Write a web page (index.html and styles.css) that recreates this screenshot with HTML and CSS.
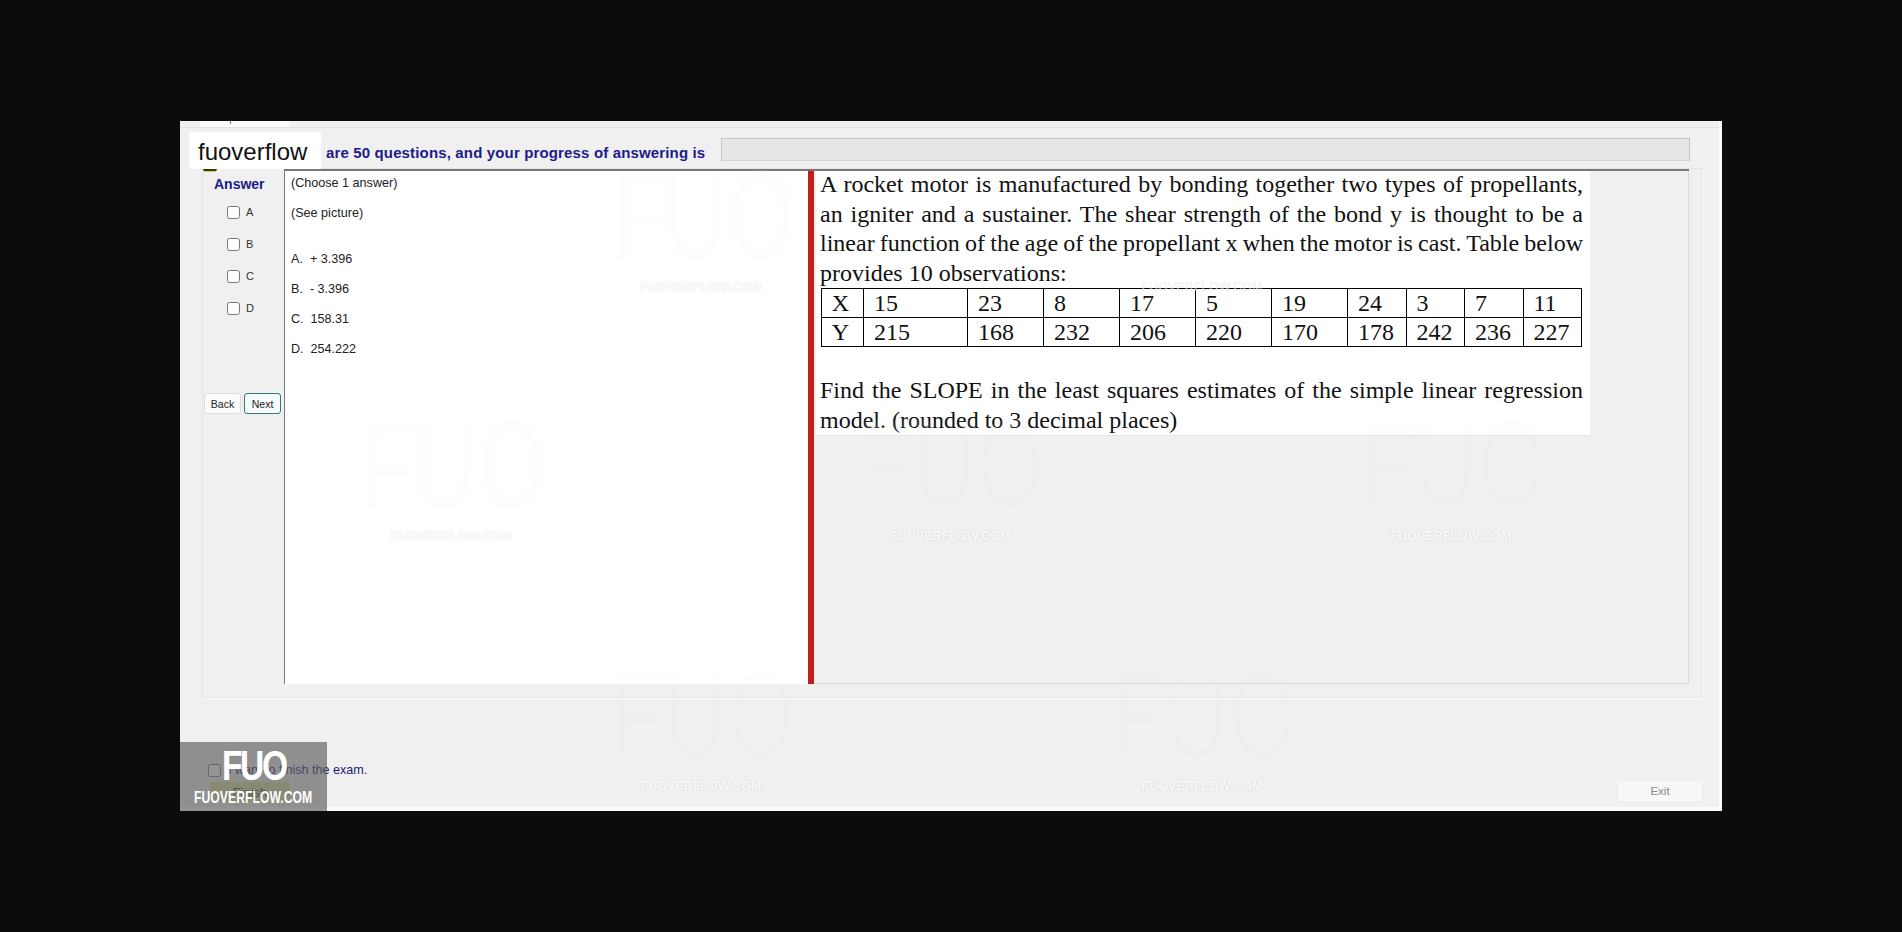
FILE: index.html
```html
<!DOCTYPE html>
<html lang="en">
<head>
  <meta charset="UTF-8" />
  <title>Exam</title>
  <meta name="viewport" content="width=device-width, initial-scale=1.0" />
  <link rel="stylesheet" href="styles.css">
</head>
<body>
  <div class="window">
    <div class="tabs"><div class="tab"></div></div>

    <div class="progress-row">
      <div class="progress-label">There are 50 questions, and your progress of answering is</div>
      <div class="progress-bar"></div>
    </div>

    <div class="frame">
      <div class="answers">
        <div class="answers-title">Answer</div>
        <label class="opt"><input type="checkbox" />A</label>
        <label class="opt"><input type="checkbox" />B</label>
        <label class="opt"><input type="checkbox" />C</label>
        <label class="opt"><input type="checkbox" />D</label>
        <div class="nav">
          <button class="btn" type="button">Back</button>
          <button class="btn btn-next" type="button">Next</button>
        </div>
      </div>

      <div class="split">
        <div class="pane-left">
          <p class="line">(Choose 1 answer)</p>
          <p class="line">(See picture)</p>
          <p class="line line-gap">A.&nbsp; + 3.396</p>
          <p class="line">B.&nbsp; - 3.396</p>
          <p class="line">C.&nbsp; 158.31</p>
          <p class="line">D.&nbsp; 254.222</p>
        </div>
        <div class="splitter"></div>
        <div class="pane-right">
          <div class="question">
            <p class="q-text q-intro">A rocket motor is manufactured by bonding together two types of propellants, an igniter and a sustainer. The shear strength of the bond y is thought to be a <span class="tight">linear function of the age of the propellant x when the motor is cast. Table below</span> provides 10 observations:</p>
            <table class="q-table">
              <colgroup>
                <col class="c-head"><col class="c-first"><col class="c-mid"><col class="c-mid"><col class="c-mid"><col class="c-mid"><col class="c-mid"><col class="c-end"><col class="c-end"><col class="c-end"><col class="c-end">
              </colgroup>
              <tr><th>X</th><td>15</td><td>23</td><td>8</td><td>17</td><td>5</td><td>19</td><td>24</td><td>3</td><td>7</td><td>11</td></tr>
              <tr><th>Y</th><td>215</td><td>168</td><td>232</td><td>206</td><td>220</td><td>170</td><td>178</td><td>242</td><td>236</td><td>227</td></tr>
            </table>
            <p class="q-text q-find">Find the SLOPE in the least squares estimates of the simple linear regression model. (rounded to 3 decimal places)</p>
          </div>
        </div>
      </div>
    </div>

    <div class="footer">
      <div class="finish">
        <label class="finish-check"><input type="checkbox" />I want to finish the exam.</label>
        <button class="btn-finish" type="button">Finish</button>
      </div>
      <button class="btn-exit" type="button">Exit</button>
    </div>

    <!-- watermarks sit on top of the app -->
    <div class="mark mark-1"><span class="mark-logo">FUO</span><span class="mark-text">FUOVERFLOW.COM</span></div>
    <div class="mark mark-2"><span class="mark-text">FUOVERFLOW.COM</span></div>
    <div class="mark mark-3"><span class="mark-logo">FUO</span><span class="mark-text">FUOVERFLOW.COM</span></div>
    <div class="mark mark-4"><span class="mark-logo">FUO</span><span class="mark-text">FUOVERFLOW.COM</span></div>
    <div class="mark mark-5"><span class="mark-logo">FUO</span><span class="mark-text">FUOVERFLOW.COM</span></div>
    <div class="mark mark-6"><span class="mark-logo">FUO</span><span class="mark-text">FUOVERFLOW.COM</span></div>
    <div class="mark mark-7"><span class="mark-logo">FUO</span><span class="mark-text">FUOVERFLOW.COM</span></div>

    <div class="brand">fuoverflow</div>
    <div class="stamp">
      <span class="stamp-logo">FUO</span>
      <span class="stamp-text">FUOVERFLOW.COM</span>
    </div>
  </div>
</body>
</html>
```

FILE: styles.css
```css
html, body {
  height: 100%;
}

body {
  margin: 0;
  background: #0c0c0c;
  font-family: "Liberation Sans", Arial, sans-serif;
  overflow: hidden;
}

p {
  margin: 0;
}

.window {
  position: relative;
  width: 1542px;
  height: 690px;
  margin: 121px 0 0 180px;
  background: #f0f0f0;
  border-right: 3px solid #fbfbfb;
  border-bottom: 4px solid #fbfbfb;
  box-sizing: border-box;
}

.tabs {
  height: 6px;
  border-bottom: 1px solid #e2e2e2;
}

.tab {
  position: relative;
  width: 90px;
  height: 6px;
  margin-left: 20px;
  background: #f9f9f9;
}

.tab::after {
  content: "";
  position: absolute;
  top: 0;
  left: 30px;
  width: 1px;
  height: 3px;
  background: #777;
}

.progress-row {
  display: flex;
  align-items: center;
  height: 23px;
  margin-top: 10px;
  padding-right: 29px;
  padding-left: 100px;
}

.progress-label {
  padding-top: 6px;
  font-size: 15px;
  font-weight: bold;
  letter-spacing: 0.15px;
  color: #1b1b8a;
  white-space: nowrap;
}

.progress-bar {
  width: 967px;
  height: 21px;
  margin-left: auto;
  background: #e6e6e6;
  border: 1px solid #c6c6c6;
  border-bottom-color: #d4d4d4;
}

.frame {
  display: flex;
  width: 1500px;
  height: 530px;
  margin-top: 7px;
  margin-left: 22px;
  border: 1px solid #e4e4e4;
  box-shadow: 1px 1px 0 #fafafa;
  box-sizing: border-box;
}

.answers {
  display: flex;
  flex-direction: column;
  width: 81px;
  flex-shrink: 0;
}

.answers-title {
  margin-top: 7px;
  padding-left: 11px;
  font-size: 14px;
  font-weight: bold;
  color: #1b1b8a;
}

.opt {
  display: flex;
  align-items: center;
  height: 32px;
  padding-left: 24px;
  font-size: 11px;
  color: #333;
}

.answers-title + .opt {
  margin-top: 4px;
}

.opt input {
  width: 13px;
  height: 13px;
  margin: 0 6px 0 0;
}

.nav {
  display: flex;
  gap: 3px;
  margin-top: 69px;
  padding-left: 1px;
}

.btn {
  width: 37px;
  height: 21px;
  padding: 0;
  font-family: inherit;
  font-size: 10.5px;
  color: #222;
  background: #fbfbfb;
  border: 1px solid #dcdcdc;
  border-radius: 3px;
}

.btn-next {
  background: #f6fbfb;
  border-color: #2f7a80;
}

.split {
  display: flex;
  width: 1405px;
  height: 515px;
  border-top: 2px solid #787878;
  box-sizing: border-box;
}

.pane-left {
  width: 524px;
  padding-top: 4px;
  padding-left: 6px;
  background: #fff;
  border-left: 1px solid #777;
  box-sizing: border-box;
}

.line {
  height: 30px;
  font-size: 12.6px;
  line-height: 16px;
  color: #222;
}

.line-gap {
  margin-top: 16px;
}

.splitter {
  width: 6px;
  flex-shrink: 0;
  background: #c41d1d;
}

.pane-right {
  flex: 1;
  padding-left: 2px;
  border-right: 1px solid #dcdcdc;
  border-bottom: 1px solid #dcdcdc;
}

.question {
  width: 774px;
  height: 265px;
  padding: 1px 7px 0 4px;
  background: #fff;
  border-bottom: 1px solid #e4e4e4;
  box-sizing: border-box;
}

.q-text {
  font-family: "Liberation Serif", "Times New Roman", serif;
  font-size: 24px;
  line-height: 29.5px;
  color: #111;
  text-align: justify;
}

.q-intro {
  margin-top: -2px;
}

.tight {
  word-spacing: -2px;
}

.q-find {
  margin-top: 29px;
}

.q-table {
  width: 760px;
  margin-left: 1px;
  border-collapse: collapse;
  table-layout: fixed;
  font-family: "Liberation Serif", "Times New Roman", serif;
  font-size: 24px;
  color: #111;
}

.q-table th,
.q-table td {
  height: 28px;
  padding: 0 0 0 10px;
  font-weight: normal;
  line-height: 28px;
  text-align: left;
  border: 1.5px solid #000;
}

.q-table th {
  padding: 0 4px 0 0;
  text-align: center;
}

.c-head { width: 42px; }
.c-first { width: 104px; }
.c-mid { width: 76px; }
.c-end { width: 58.5px; }

.footer {
  display: flex;
  align-items: flex-end;
  justify-content: space-between;
  height: 109px;
  padding: 0 17px 5px 28px;
  box-sizing: border-box;
}

.finish {
  display: flex;
  flex-direction: column;
  align-items: flex-start;
}

.finish-check {
  display: flex;
  align-items: center;
  font-size: 12.6px;
  color: #1b1b70;
}

.finish-check input {
  width: 13px;
  height: 13px;
  margin: 0 7px 0 0;
}

.btn-finish {
  width: 80px;
  height: 20px;
  margin-top: 5px;
  margin-left: 2px;
  padding: 0;
  font-family: inherit;
  font-size: 13px;
  color: #3c3c20;
  background: #dde2a0;
  border: 0;
}

.btn-exit {
  width: 84px;
  height: 20px;
  margin-bottom: 1px;
  padding: 0;
  font-family: inherit;
  font-size: 11.5px;
  color: #8a8a8a;
  background: #f7f7f7;
  border: 0;
  border-radius: 2px;
}

.brand {
  position: absolute;
  top: 11px;
  left: 9px;
  width: 132px;
  height: 37px;
  padding-left: 9px;
  font-size: 24px;
  line-height: 40px;
  color: #111;
  background: #fff;
  box-sizing: border-box;
}

.brand::after {
  content: "";
  position: absolute;
  top: 37px;
  left: 14px;
  width: 14px;
  height: 2px;
  background: #3a3416;
  border-radius: 0 0 7px 7px;
  border-bottom: 1px solid #d8cf5a;
}

.stamp {
  position: absolute;
  bottom: -4px;
  left: 0;
  display: flex;
  flex-direction: column;
  align-items: center;
  width: 147px;
  height: 69px;
  color: #fff;
  background: rgba(91, 91, 91, 0.65);
}

.stamp-logo {
  height: 32px;
  margin-top: 8px;
  font-size: 42px;
  font-weight: bold;
  line-height: 32px;
  letter-spacing: -3px;
  transform: scaleX(0.8);
}

.stamp-text {
  margin-top: 8px;
  font-size: 17px;
  font-weight: bold;
  line-height: 16px;
  white-space: nowrap;
  transform: scaleX(0.72);
}

.mark {
  position: absolute;
  display: flex;
  flex-direction: column;
  align-items: center;
  width: 220px;
  pointer-events: none;
}

.mark-logo {
  font-size: 130px;
  font-weight: bold;
  line-height: 112px;
  letter-spacing: -6px;
  color: rgba(255, 255, 255, 0.1);
  text-shadow: 0 0 4px rgba(0, 0, 0, 0.008);
  transform: scaleX(0.72);
}

.mark-text {
  margin-top: 8px;
  font-size: 12.5px;
  font-weight: bold;
  line-height: 14px;
  color: rgba(255, 255, 255, 0.85);
  text-shadow: 0 0 2px rgba(0, 0, 0, 0.12);
}

.mark-2 .mark-text {
  color: rgba(235, 235, 235, 0.6);
  text-shadow: none;
}

.mark-1 { left: 411px; top: 39px; }
.mark-2 { left: 912px; top: 151px; }
.mark-3 { left: 161px; top: 288px; }
.mark-4 { left: 660px; top: 288px; }
.mark-5 { left: 1161px; top: 288px; }
.mark-6 { left: 411px; top: 538px; }
.mark-7 { left: 912px; top: 538px; }
```
